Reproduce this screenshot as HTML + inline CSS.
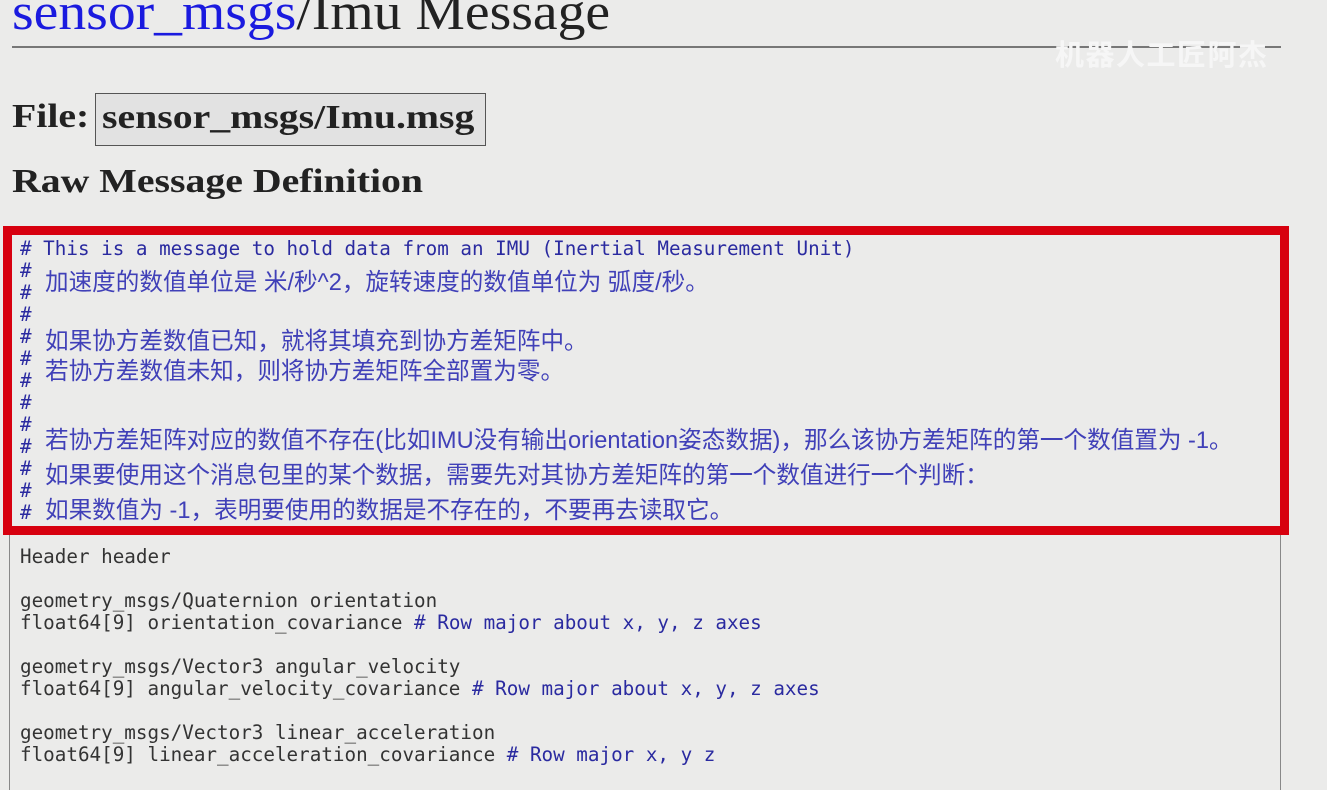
<!DOCTYPE html>
<html><head><meta charset="utf-8"><style>
html,body{margin:0;padding:0;background:#ebebea;width:1327px;height:790px;overflow:hidden;position:relative}
.a{position:absolute;white-space:nowrap}
.serif{font-family:"Liberation Serif","DejaVu Serif",serif;color:#222}
.sx{transform:scaleX(1.17);transform-origin:0 0}
.mono{font-family:"DejaVu Sans Mono","Liberation Mono",monospace;font-size:19.25px;color:#333}
.cn{font-family:"Liberation Sans","Noto Sans CJK SC",sans-serif;font-size:23.6px;color:#4040b8}
.hash{color:#2a2aa0}
</style></head><body>
<div class="a serif" style="left:12px;top:-17px;font-size:52px;line-height:60px;transform:scaleX(1.07);transform-origin:0 0"><span style="color:#1a1adf">sensor_msgs</span>/Imu Message</div>
<div class="a" style="left:12px;top:46px;width:1269px;height:2px;background:#777"></div>
<div class="a" style="left:1055px;top:35px;font-family:'Noto Sans CJK SC',sans-serif;font-weight:bold;font-size:29px;line-height:36px;color:#f6f6f6;letter-spacing:1.5px">机器人工匠阿杰</div>
<div class="a serif sx" style="left:12px;top:97px;font-size:34px;font-weight:bold;line-height:40px">File:</div>
<div class="a" style="left:95px;top:93px;width:391px;height:53px;border:1px solid #555;background:#e2e2e2;box-sizing:border-box"></div>
<div class="a serif sx" style="left:102px;top:98px;font-size:34px;font-weight:bold;line-height:40px">sensor_msgs/Imu.msg</div>
<div class="a serif sx" style="left:12px;top:162px;font-size:34px;font-weight:bold;line-height:40px">Raw Message Definition</div>
<div class="a" style="left:9px;top:528px;width:1272px;height:300px;border:1px solid #888;box-sizing:border-box"></div>
<div class="a" style="left:3px;top:226px;width:1286px;height:309px;border:9px solid #d7000f;box-sizing:border-box"></div>
<div class="a mono" style="left:20px;top:238px;line-height:22px;white-space:pre"><span class="hash"># This is a message to hold data from an IMU (Inertial Measurement Unit)
#
#
#
#
#
#
#
#
#
#
#
#</span></div>
<div class="a cn" style="left:45px;top:263px">加速度的数值单位是 米/秒^2，旋转速度的数值单位为 弧度/秒。</div>
<div class="a cn" style="left:45px;top:322px">如果协方差数值已知，就将其填充到协方差矩阵中。</div>
<div class="a cn" style="left:45px;top:352px">若协方差数值未知，则将协方差矩阵全部置为零。</div>
<div class="a cn" style="left:45px;top:421px">若协方差矩阵对应的数值不存在(比如IMU没有输出orientation姿态数据)，那么该协方差矩阵的第一个数值置为 -1。</div>
<div class="a cn" style="left:45px;top:456px">如果要使用这个消息包里的某个数据，需要先对其协方差矩阵的第一个数值进行一个判断：</div>
<div class="a cn" style="left:45px;top:491px">如果数值为 -1，表明要使用的数据是不存在的，不要再去读取它。</div>
<div class="a mono" style="left:20px;top:546px;line-height:22px;white-space:pre">Header header

geometry_msgs/Quaternion orientation
float64[9] orientation_covariance <span class="hash"># Row major about x, y, z axes</span>

geometry_msgs/Vector3 angular_velocity
float64[9] angular_velocity_covariance <span class="hash"># Row major about x, y, z axes</span>

geometry_msgs/Vector3 linear_acceleration
float64[9] linear_acceleration_covariance <span class="hash"># Row major x, y z</span></div>
</body></html>
